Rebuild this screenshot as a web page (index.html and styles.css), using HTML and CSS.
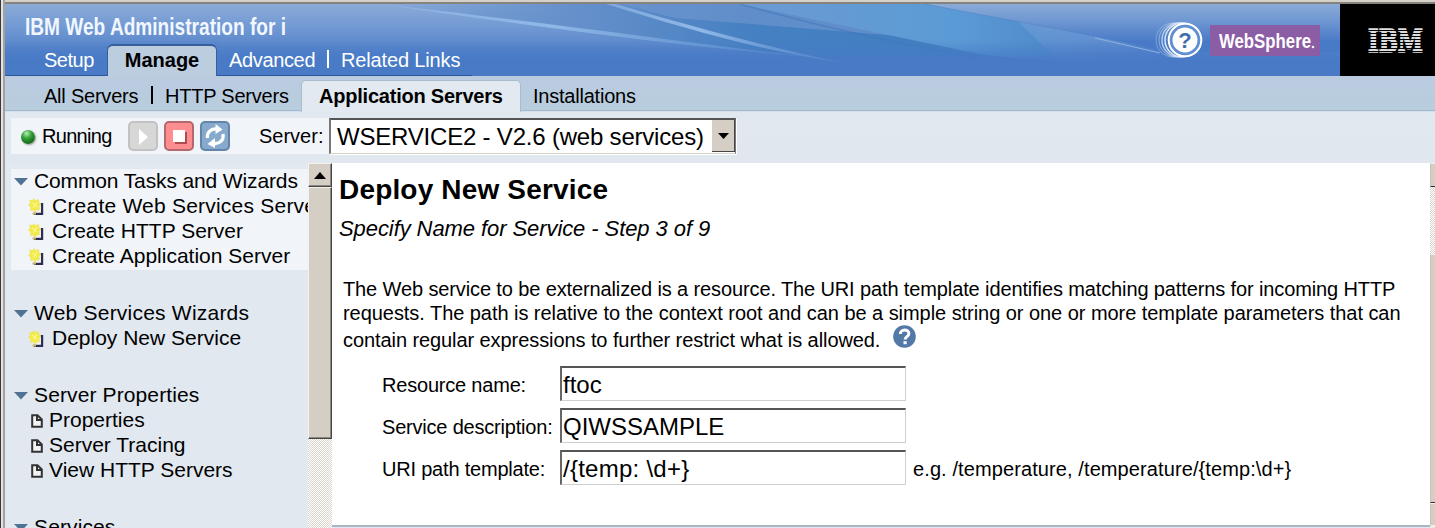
FILE: index.html
```html
<!DOCTYPE html>
<html lang="en">
<head>
<meta charset="utf-8">
<title>IBM Web Administration for i</title>
<link rel="stylesheet" href="styles.css">
</head>
<body>
<svg class="defs" width="0" height="0" aria-hidden="true">
  <symbol id="new" viewBox="0 0 16 18">
    <path d="M6 15.800h8V5" fill="none" stroke="#2c2f52" stroke-width="2.400"/>
    <path d="M5 7h8v7.600H5z" fill="#f2eff0"/>
    <path d="M4.500 15.500h3.500" stroke="#c9b565" stroke-width="2"/>
    <path d="M6 .5l1.200 2.200L10.500 1.500l.5 3 1.500 2.500-1.700 1.500.7 3-2.500.5L7 14l-1.500-2-3 .5.3-3L.5 7l2-2L1.500 2l3 .5z" fill="#f3ec48" stroke="#e8e06a" stroke-width=".6"/>
    <path d="M4 5l5 4M9 4L5.500 9.500" stroke="#fbf9a8"/>
  </symbol>
  <symbol id="doc" viewBox="0 0 12 14">
    <path d="M1.200 1.200h5.300l4.300 4.300v7.300H1.200z" fill="#f4f4f4" stroke="#333" stroke-width="2"/>
    <path d="M6 1v5h5" fill="none" stroke="#333" stroke-width="2"/>
  </symbol>
  <symbol id="tri" viewBox="0 0 14 8"><path d="M0 0h14L7 7.500z" fill="#507394"/></symbol>
</svg>
<div class="window">
  <div class="edge"><i class="e1"></i><i class="e2"></i><i class="e3"></i></div>
  <div class="app">
    <header class="banner">
      <svg class="swoosh" viewBox="5 4 1335 72" preserveAspectRatio="none">
        <defs>
          <linearGradient id="g1" x1="0" y1="0" x2="0" y2="1"><stop offset="0" stop-color="#8aabd8"/><stop offset=".35" stop-color="#6f97d2"/><stop offset=".78" stop-color="#497ac7"/><stop offset="1" stop-color="#487ac6"/></linearGradient>
          <linearGradient id="g2" x1="0" x2="1"><stop offset="0" stop-color="#648fc9" stop-opacity="0"/><stop offset=".3" stop-color="#648fca"/><stop offset=".55" stop-color="#4580c2"/><stop offset="1" stop-color="#3f7dbf"/></linearGradient>
          <linearGradient id="g3" x1="0" x2="1"><stop offset="0" stop-color="#6c9ad2"/><stop offset=".5" stop-color="#5b9bd5"/><stop offset="1" stop-color="#5f92d2" stop-opacity="0"/></linearGradient>
          <linearGradient id="g4" x1="0" x2="1"><stop offset="0" stop-color="#a0c1ea" stop-opacity=".5"/><stop offset=".4" stop-color="#8fb8e8"/><stop offset="1" stop-color="#6592d4" stop-opacity=".3"/></linearGradient>
          <linearGradient id="g6" x1="0" x2="0" y1="0" y2="1"><stop offset=".5" stop-color="#487ac6" stop-opacity="0"/><stop offset=".84" stop-color="#487ac6"/></linearGradient>
        </defs>
        <path d="M5 4h1335v72H5z" fill="url(#g1)"/>
        <path d="M380 4h620l60 58H840L610 37z" fill="url(#g2)"/>
        <path d="M620 4h125l180 34-250-20z" fill="#6c94cd" opacity=".7"/>
        <path d="M740 4h185c70 12 160 28 240 48v10h-60c-50 0-110-4-145-12z" fill="url(#g3)"/>
        <path d="M925 4c80 16 160 28 240 48h175V4z" fill="url(#g1)"/>
        <path d="M740 4c70 20 140 37 240 54" fill="none" stroke="#3f75ba" stroke-width="1.500" opacity=".5"/>
        <path d="M5 4h1335v72H5z" fill="url(#g6)"/>
        <path d="M380 4c130 14 300 38 430 53-140-11-300-34-430-53z" fill="url(#g4)"/>
        <path d="M606 4h10c74 22 154 44 229 59-80-11-165-36-239-59z" fill="url(#g4)"/>
        <path d="M925 4c80 16 160 28 240 48" fill="none" stroke="#4f82c6" stroke-width="1" opacity=".5"/>
        <path d="M1095 38l65 15" stroke="#8db2e3" stroke-width="1"/>
      </svg>
      <div class="brand-row">
        <svg class="title" width="266" height="34" viewBox="0 0 266 34"><text x="1" y="27" textLength="261" lengthAdjust="spacingAndGlyphs">IBM Web Administration for i</text></svg>
      </div>
      <nav class="tabs">
        <span class="tab t-setup">Setup</span>
        <span class="tab current">Manage</span>
        <span class="tab t-adv">Advanced</span>
        <i class="sep"></i>
        <span class="tab t-rel">Related Links</span>
      </nav>
      <div class="logos">
        <svg class="help" width="52" height="40" viewBox="0 0 52 40">
          <g fill="none" stroke="#d9e7f8"><circle cx="20" cy="19" r="17" opacity=".35"/><circle cx="23" cy="19" r="17" opacity=".5"/><circle cx="26" cy="19" r="17" opacity=".75" stroke-width="1.500"/><circle cx="29" cy="19" r="17" stroke-width="1.500"/></g>
          <circle cx="32" cy="19" r="16.300" fill="#5f8fd1" stroke="#fff" stroke-width="2"/>
          <circle cx="32" cy="19" r="12.500" fill="#fff"/>
          <text x="32" y="27" text-anchor="middle">?</text>
        </svg>
        <svg class="websphere" width="110" height="31" viewBox="0 0 110 31"><text x="9" y="22.500" textLength="92" lengthAdjust="spacingAndGlyphs">WebSphere</text><circle cx="103" cy="22" r="1.300" fill="#eee"/></svg>
      </div>
      <div class="ibm">
        <svg width="58" height="26" viewBox="0 0 58 26">
          <defs><pattern id="stripe" width="4" height="3" patternUnits="userSpaceOnUse"><path d="M0 0h4v2H0z" fill="#dedede"/></pattern></defs>
          <text x="1" y="24" textLength="55" lengthAdjust="spacingAndGlyphs" fill="url(#stripe)" stroke="url(#stripe)" stroke-width="1.600">IBM</text>
        </svg>
      </div>
    </header>
    <nav class="subnav">
      <span class="s-all">All Servers</span><i class="sep"></i><span class="s-http">HTTP Servers</span>
      <span class="subcurrent">Application Servers</span><span class="s-inst">Installations</span>
    </nav>
    <div class="toolbar">
      <div class="status">
        <i class="led"></i><span class="run">Running</span>
        <div class="buttons">
          <svg width="30" height="30" viewBox="0 0 30 30"><rect x="1" y="1" width="28" height="28" rx="4" fill="#d7d7d7" stroke="#c2c2c2" stroke-width="2"/><path d="M11 8l9 8-9 8z" fill="#fff"/></svg>
          <svg width="30" height="30" viewBox="0 0 30 30"><rect x="1" y="1" width="28" height="28" rx="4" fill="#fd8d8f" stroke="#b3686d" stroke-width="2"/><path d="M11 11h12v12H11z" fill="#b14b50"/><path d="M9 9h12v12H9z" fill="#fff"/></svg>
          <svg width="30" height="30" viewBox="0 0 30 30"><rect x="1" y="1" width="28" height="28" rx="4" fill="#86a9cc" stroke="#6385aa" stroke-width="2"/><g fill="none" stroke="#fff" stroke-width="3.200"><path d="M7.500 17c-1-5 3-9.500 9.500-9"/><path d="M23 13c1 6-3 10-9 9.500"/></g><path d="M15.500 3l7 5.500-7 4.500zM15 17v10l-7.500-4z" fill="#fff"/></svg>
        </div>
        <span class="srv">Server:</span>
      </div>
      <div class="select"><span>WSERVICE2 - V2.6 (web services)</span><b><svg width="11" height="6" viewBox="0 0 11 6"><path d="M0 0h11L5.500 6z"/></svg></b></div>
    </div>
    <div class="body">
      <aside class="side">
        <section class="group lit">
          <h3><svg><use href="#tri"/></svg><span class="tight">Common Tasks and Wizards</span></h3>
          <p class="wiz"><svg><use href="#new"/></svg><span class="looser">Create Web Services Server</span></p>
          <p class="wiz"><svg><use href="#new"/></svg><span>Create HTTP Server</span></p>
          <p class="wiz"><svg><use href="#new"/></svg><span>Create Application Server</span></p>
        </section>
        <section class="group">
          <h3><svg><use href="#tri"/></svg><span class="looser">Web Services Wizards</span></h3>
          <p class="wiz"><svg><use href="#new"/></svg><span>Deploy New Service</span></p>
        </section>
        <section class="group">
          <h3><svg><use href="#tri"/></svg><span class="loose">Server Properties</span></h3>
          <p class="page"><svg><use href="#doc"/></svg><span>Properties</span></p>
          <p class="page"><svg><use href="#doc"/></svg><span>Server Tracing</span></p>
          <p class="page"><svg><use href="#doc"/></svg><span>View HTTP Servers</span></p>
        </section>
        <section class="group">
          <h3><svg><use href="#tri"/></svg><span class="loose">Services</span></h3>
        </section>
      </aside>
      <div class="scroll"><div class="up"><svg width="12" height="7" viewBox="0 0 12 7"><path d="M0 7L6 0l6 7z"/></svg></div><div class="thumb"></div></div>
      <main class="main">
        <h1><span>Deploy New Service</span></h1>
        <h2><span>Specify Name for Service - Step 3 of 9</span></h2>
        <div class="intro">
          <div><span class="l1">The Web service to be externalized is a resource. The URI path template identifies matching patterns for incoming HTTP</span></div>
          <div><span class="l2">requests. The path is relative to the context root and can be a simple string or one or more template parameters that can</span></div>
          <div class="last"><span class="l3">contain regular expressions to further restrict what is allowed.</span><svg width="23" height="24" viewBox="0 0 23 24"><circle cx="11.500" cy="11.500" r="11.300" fill="#5379a8"/><path d="M7.300 9c0-5.200 8.600-5.200 8.600-.5 0 3.200-3.800 3-3.800 6" fill="none" stroke="#fff" stroke-width="3"/><path d="M10.500 16.200h3.200v3h-3.200z" fill="#fff"/></svg></div>
        </div>
        <div class="form">
          <label class="f1">Resource name:</label><div class="input"><span>ftoc</span></div><i></i>
          <label class="f2">Service description:</label><div class="input"><span>QIWSSAMPLE</span></div><i></i>
          <label class="f3">URI path template:</label><div class="input"><span class="uri">/{temp: \d+}</span></div><em>e.g. /temperature, /temperature/{temp:\d+}</em>
        </div>
      </main>
      <div class="rscroll"><i class="rb"></i><i class="rt"></i><i class="rc"></i></div>
    </div>
  </div>
</div>
</body>
</html>
```
FILE: styles.css
```css
* { box-sizing: border-box; }
body { margin: 0; overflow: hidden; font-family: "Liberation Sans", Arial, sans-serif; font-size: 20px; color: #000; }
h1, h2, h3, p { margin: 0; font-weight: normal; font-size: inherit; }
svg { display: block; flex: none; overflow: visible; }
.defs { position: absolute; }
span, label, em { white-space: nowrap; }
.window { width: 1435px; height: 528px; display: grid; grid-template-columns: 5px 1fr; grid-template-rows: 528px; overflow: hidden; background: #e1e8ef; }
.edge { display: flex; }
.edge i { display: block; }
.e1 { width: 1px; background: #37374a; }
.e2 { width: 2px; background: #e6e2dc; }
.e3 { width: 2px; background: #a5a29e; }
.app { border-top: 2px solid #d5d0c8; display: flex; flex-direction: column; min-width: 0; }

.banner { position: relative; height: 74px; flex: none; border-top: 2px solid #85837f; display: grid; grid-template-columns: 1148px 187px 95px; grid-template-rows: 40px 32px; }
.swoosh { position: absolute; left: 0; top: 0; width: 1335px; height: 72px; overflow: hidden; }
.brand-row, .tabs, .logos, .ibm { position: relative; }
.brand-row { padding: 4px 0 0 19px; }
.title text { font-size: 24px; font-weight: bold; fill: #f2f7ff; }
.tabs { grid-row: 2; display: flex; color: #fff; line-height: 32px; }
.tab, .tabs .sep { border-bottom: 1px solid #2b5798; height: 32px; }
.t-setup { width: 102px; padding-left: 39px; letter-spacing: -.5px; }
.tabs .current { width: 110px; color: #000; background: #bccde0; border: 1px solid #355f9c; border-top-width: 2px; border-bottom: 0; border-radius: 6px 6px 0 0; text-align: center; font-weight: bold; line-height: 28px; }
.t-adv { width: 110px; padding-left: 12px; letter-spacing: -.35px; }
.tabs .sep { width: 14px; background: linear-gradient(#fff, #fff) 0 6px / 2px 18px no-repeat; }
.t-rel { width: 131px; letter-spacing: -.15px; }
.logos { grid-column: 2; grid-row: 1 / 3; display: flex; padding-top: 17px; }
.help text { font-size: 22px; font-weight: bold; fill: #416fae; }
.websphere { margin: 4px 0 0 5px; background: #8a5da5; }
.websphere text { font-size: 20px; font-weight: bold; fill: #fff; }
.ibm { grid-column: 3; grid-row: 1 / 3; background: #000; padding: 24px 0 0 27px; }
.ibm text { font-family: "DejaVu Serif", serif; font-weight: bold; font-size: 31px; }

.subnav { height: 36px; flex: none; display: flex; line-height: 40px; letter-spacing: -.22px; background: linear-gradient(#bbcbe0, #b8cddd 34px, #a3b9ce 34px, #a3b9ce 35px, #d5e0ea 35px); }
.s-all { width: 146px; padding-left: 39px; }
.subnav .sep { width: 14px; background: linear-gradient(#000, #000) 0 10px / 2px 18px no-repeat; }
.s-http { width: 136px; }
.subcurrent { width: 220px; margin-top: 4px; height: 32px; background: #e2e9f0; border: 1px solid #a9bccf; border-width: 1px 1px 0; border-radius: 5px 5px 0 0; font-weight: bold; line-height: 31px; padding-left: 17px; }
.s-inst { padding-left: 12px; }

.toolbar { height: 51px; flex: none; padding: 6px 0 0 6px; display: flex; background: linear-gradient(#e1e8ef, #e0e7ee); }
.status { width: 318px; height: 36px; background: #f1f5f9; display: flex; align-items: center; }
.led { width: 14px; height: 14px; margin: 1px 7px 0 10px; border-radius: 50%; background: radial-gradient(circle at 40% 25%, #b7eeb5 0, #35a43a 35%, #16681b 75%); box-shadow: 1px 1px 2px #909990; }
.run { width: 86px; letter-spacing: -.7px; }
.buttons { display: flex; gap: 6px; width: 131px; }
.select { width: 407px; height: 36px; border: 1px solid #777; border-top: 2px solid #555; border-left-width: 2px; border-bottom: 1px solid #d6d2ca; background: #fff; display: flex; line-height: 33px; font-size: 24px; letter-spacing: -.2px; box-shadow: 1px 1px #fff; }
.select span { width: 381px; padding-left: 6px; }
.select b { width: 23px; height: 32px; background: #d5cec5; border-right: 1px solid #444; border-bottom: 1px solid #444; display: flex; align-items: center; justify-content: center; }

.body { flex: 1; min-height: 0; display: grid; grid-template-columns: 303px 24px 1098px 5px; grid-template-rows: 365px; }
.side { overflow: hidden; padding: 6px 0 0 6px; min-height: 0; font-size: 21px; }
.group { height: 82px; line-height: 25px; }
.group.lit { height: 101px; margin-bottom: 31px; background: #f1f5f9; }
.group:nth-child(3) { height: 132px; }
.group h3, .group p { display: flex; align-items: center; height: 25px; }
.group span { padding-bottom: 2px; }
.group h3 { padding-left: 3px; }
.group h3 svg { width: 14px; height: 8px; margin-right: 6px; }
.tight { letter-spacing: -.13px; }
.loose { letter-spacing: .12px; }
.looser { letter-spacing: .22px; }
.wiz { padding-left: 17px; }
.wiz svg { width: 16px; height: 18px; margin-right: 8px; }
.page { padding-left: 20px; }
.page svg { width: 12px; height: 14px; margin: 1px 6px 0 0; }
.scroll { background: repeating-conic-gradient(#fff 0 25%, #d9d4cc 0 50%) 0 0 / 2px 2px; }
.up, .thumb { background: #d5cec5; border: 1px solid #f6f3ee; border-right: 1px solid #444; border-bottom: 1px solid #444; box-shadow: inset -1px -1px #8d8983; }
.up { height: 24px; display: flex; align-items: center; justify-content: center; }
.thumb { height: 252px; }
.main { background: #fff; border-bottom: 2px solid #a9b5c1; padding-left: 7px; margin-bottom: 1px; }
.main h1 { font-size: 28px; font-weight: bold; line-height: 32px; padding-top: 11px; letter-spacing: .17px; }
.main h2 { font-style: italic; font-size: 22px; line-height: 26px; padding-top: 10px; letter-spacing: -.08px; }
.intro { padding: 35px 0 0 4px; line-height: 24px; }
.l1 { letter-spacing: -.12px; }
.l2 { letter-spacing: -.05px; }
.l3 { letter-spacing: -.08px; }
.intro .last { display: flex; height: 27px; align-items: center; }
.last span { padding-top: 3px; }
.last svg { margin-left: 13px; margin-top: -3px; }
.form { display: grid; grid-template-columns: 178px 346px 1fr; grid-auto-rows: 35px; row-gap: 7px; padding: 14px 0 0 43px; line-height: 38px; letter-spacing: -.2px; }
.form .input { width: 346px; height: 35px; border: 1px solid #cfcfcf; border-top: 2px solid #555; border-left: 2px solid #666; font-size: 24px; line-height: 34px; padding-left: 1px; letter-spacing: 0; }
.uri { letter-spacing: .25px; }
.form em { font-style: normal; padding-left: 7px; letter-spacing: .1px; }
.rscroll { background: repeating-conic-gradient(#fff 0 25%, #d9d4cc 0 50%) 0 0 / 2px 2px; }
.rscroll i { display: block; background: #d5cec5; border: 1px solid #f4f1ec; border-left-color: #c5c1bb; border-right: 0; }
.rscroll .rb { height: 24px; border-bottom: 1px solid #333; }
.rscroll .rt { margin-top: 67px; height: 249px; border-bottom: 1px solid #333; }
.rc { height: 23px; }
```
